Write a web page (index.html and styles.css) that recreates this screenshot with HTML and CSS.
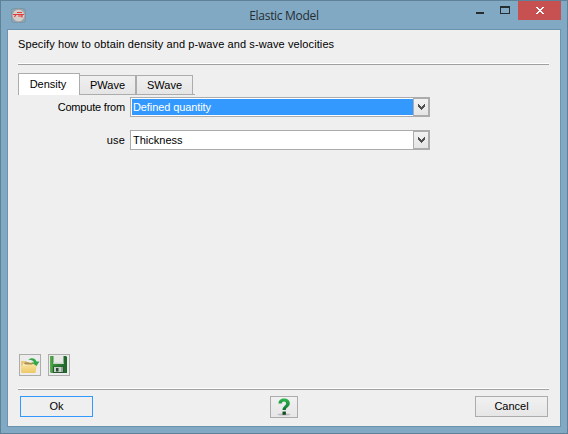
FILE: index.html
```html
<!DOCTYPE html>
<html lang="en">
<head>
<meta charset="utf-8">
<title>Elastic Model</title>
<link rel="stylesheet" href="styles.css">
</head>
<body>
<div class="window">
  <header class="titlebar">
    <svg class="app-icon" width="16" height="16" viewBox="0 0 16 16">
      <rect x=".5" y=".5" width="14" height="14" rx="2" fill="#8ba4b2" stroke="#7898aa"/>
      <circle cx="7.5" cy="7.5" r="6.300" fill="#d3cfcd" stroke="#aaa09e"/>
      <path d="M2 6.500h11M6 4.500h5M5 6.500 3.500 9M11 6.500v3M7 8h4" fill="none" stroke="#e23b3b" stroke-width="1.200"/>
    </svg>
    <h1 class="title">Elastic Model</h1>
    <div class="controls">
      <svg width="62" height="19" viewBox="0 0 62 19" shape-rendering="crispEdges">
        <rect x="20" y="11" width="8" height="2" fill="#262d31"/>
        <path d="M44 5h10v8H44zM45 7v5h8V7z" fill="#262d31" fill-rule="evenodd"/>
      </svg>
      <div class="close">
        <svg width="8" height="7" viewBox="0 0 8 7" shape-rendering="crispEdges"><path d="M0 0h2v1h1v1h2V1h1V0h2v1H7v1H6v1H5v1h1v1h1v1h1v1H6V6H5V5H3v1H2v1H0V6h1V5h1V4h1V3H2V2H1V1H0z" fill="#fff"/></svg>
      </div>
    </div>
  </header>
  <main class="client">
    <p class="intro">Specify how to obtain density and p-wave and s-wave velocities</p>
    <div class="rule"></div>
    <nav class="tabs">
      <div class="tab active"><span class="t-density">Density</span></div>
      <div class="tab divided"><span>PWave</span></div>
      <div class="tab last"><span>SWave</span></div>
      <div class="tab-end"></div>
    </nav>
    <section class="form">
      <div class="label"><span class="t-compute">Compute from</span></div>
      <div class="combo selected"><div class="value"><span class="t-defined">Defined quantity</span></div><div class="drop"><svg width="7" height="6" viewBox="0 0 7 6" shape-rendering="crispEdges"><path d="M0 0h1v1h1v1h1v1h1V2h1V1h1V0h1v3H6v1H5v1H4v1H3V5H2V4H1V3H0z" fill="#505050"/></svg></div></div>
      <div class="label"><span class="t-use">use</span></div>
      <div class="combo"><div class="value"><span>Thickness</span></div><div class="drop"><svg width="7" height="6" viewBox="0 0 7 6" shape-rendering="crispEdges"><path d="M0 0h1v1h1v1h1v1h1V2h1V1h1V0h1v3H6v1H5v1H4v1H3V5H2V4H1V3H0z" fill="#505050"/></svg></div></div>
    </section>
    <div class="tools">
      <div class="tool">
        <svg width="20" height="20" viewBox="0 0 20 20">
          <defs><linearGradient id="folder" x2="0" y2="1"><stop stop-color="#f8e3a0"/><stop offset="1" stop-color="#ecc966"/></linearGradient></defs>
          <path d="M1 6h5l1.500 1.500H15V17H1z" fill="#e7c775"/>
          <path d="M3 8.500h12V12H3z" fill="#f9efd0"/>
          <path d="M.5 10.500H7L8.500 9H17l-1.500 9H1.500z" fill="url(#folder)"/>
          <path d="M4 8c2-1 4-1 6 0h4l-2 1.500H5z" fill="#a78d4e"/>
          <path d="M8 5c3-2.800 7-2.200 8.500 1.500h3l-3 4.500-5-3.500h2.500C13 5.500 11 4.500 8 5z" fill="#35a64a"/>
        </svg>
      </div>
      <div class="tool">
        <svg width="20" height="20" viewBox="0 0 20 20">
          <defs><linearGradient id="disk" x2="1"><stop stop-color="#64b154"/><stop offset=".2" stop-color="#368e38"/><stop offset="1" stop-color="#1f642b"/></linearGradient></defs>
          <path d="M1 1h16l1 1v16H2l-1-1z" fill="url(#disk)"/>
          <path d="M4.500 1h10v8h-10z" fill="#e6e9e6"/>
          <path d="M4.500 7.500h10V9h-10z" fill="#cfd8cf"/>
          <path d="M4 11.500h11V18H4z" fill="#2b5734"/>
          <path d="M5 12h9v5H5z" fill="#c8d2cb"/>
          <path d="M7 13h2.500v3.500H7z" fill="#284b32"/>
          <path d="M12 12h2v5h-2z" fill="#8fa896"/>
        </svg>
      </div>
    </div>
    <div class="rule"></div>
    <footer class="actions">
      <div class="button primary"><span>Ok</span></div>
      <div class="button help">
        <svg width="26" height="20" viewBox="0 0 26 20">
          <defs><linearGradient id="help" x2="0" y2="1"><stop stop-color="#2fb64e"/><stop offset=".55" stop-color="#168638"/><stop offset="1" stop-color="#123c20"/></linearGradient></defs>
          <ellipse cx="13" cy="17.500" rx="6.500" ry="1" fill="#bbb"/>
          <path d="M7.500 6.500C7.500 3 10 1.500 13 1.500c3.500 0 5.800 1.800 5.800 4.700 0 4-4 3.800-4 6.800h-3.300c0-4 3.600-4.200 3.600-6.600 0-1.200-.8-2-2.100-2-1.400 0-2.100.8-2.200 2.100zM11.500 14.500h3.400v3.200h-3.400z" fill="url(#help)"/>
        </svg>
      </div>
      <div class="button"><span>Cancel</span></div>
    </footer>
  </main>
</div>
</body>
</html>
```
FILE: styles.css
```css
* { box-sizing: border-box; }
body {
  margin: 0;
  font: 11px/13px "Liberation Sans", Arial, sans-serif;
  color: #000;
}
svg { display: block; flex: none; }
span { white-space: nowrap; }
.window {
  width: 568px;
  height: 434px;
  padding: 0 6px 6px;
  border: 1px solid #5f8299;
  background: #82a9c4;
}
.titlebar {
  display: grid;
  grid-template-columns: 154px 1fr 154px;
  height: 28px;
}
.app-icon { margin: 7px 0 0 4px; }
.title {
  margin: 6px 0 0;
  font: 12px/18px "Open Sans", "Noto Sans", sans-serif;
  letter-spacing: -.3px;
  text-align: center;
  color: #252d32;
}
.controls { display: flex; justify-content: flex-end; }
.close {
  display: flex;
  align-items: center;
  justify-content: center;
  width: 43px;
  height: 19px;
  background: #c75050;
}
.client {
  display: flex;
  flex-direction: column;
  height: 398px;
  padding: 8px 11px 0 10px;
  border: 1px solid #6c93ae;
  background: #efefef;
}
.intro { margin: 0 0 12px; letter-spacing: .1px; white-space: nowrap; }
.rule {
  flex: none;
  height: 2px;
  border-top: 1px solid #fff;
  border-bottom: 1px solid #a0a0a0;
}
.tabs { display: flex; align-items: flex-end; height: 22px; margin-top: 8px; }
.tab {
  display: flex;
  align-items: center;
  justify-content: center;
  width: 57px;
  height: 20px;
  border: 1px solid #acacac;
  border-left: 0;
  background: linear-gradient(#f0f0f0, #e5e5e5);
}
.tab.divided { border-right-width: 2px; }
.tab.last { width: 56px; }
.tab.active {
  width: 62px;
  height: 22px;
  padding-right: 2px;
  border-left: 1px solid #acacac;
  border-bottom: 0;
  background: #fff;
}
.tab-end { width: 2px; height: 1px; background: #acacac; }
.form {
  display: grid;
  grid-template-columns: 107px 300px;
  column-gap: 5px;
  row-gap: 13px;
  margin-top: 2px;
}
.label { text-align: right; line-height: 20px; }
.t-compute { letter-spacing: -.2px; }
.t-use { letter-spacing: .2px; }
.t-defined { letter-spacing: -.1px; }
.combo {
  display: flex;
  height: 20px;
  border: 1px solid #acacac;
  background: #fff;
}
.value { flex: 1; padding-left: 1px; margin: 1px 0 1px 1px; line-height: 16px; }
.selected .value { background: #3399ff; color: #fff; }
.drop {
  display: flex;
  align-items: center;
  justify-content: center;
  width: 17px;
  padding-left: 1px;
  border: 1px solid #acacac;
  border-left-width: 1px;
  background: linear-gradient(#f1f1f1, #e5e5e5);
}
.combo .drop { width: 16px; }
.tools { display: flex; gap: 7px; margin: auto 0 12px 1px; }
.tool { width: 22px; height: 22px; border: 1px solid #acacac; background: #ececec; }
.actions {
  display: grid;
  grid-template-columns: 73px 28px 73px;
  justify-content: space-between;
  height: 22px;
  margin: 6px 1px 8px 2px;
}
.button {
  display: flex;
  align-items: center;
  justify-content: center;
  height: 21px;
  border: 1px solid #acacac;
  background: linear-gradient(#f1f1f1, #e6e6e6);
}
.button.primary { border-color: #3399ff; background: #efefef; }
.button.help { height: 22px; }
```
